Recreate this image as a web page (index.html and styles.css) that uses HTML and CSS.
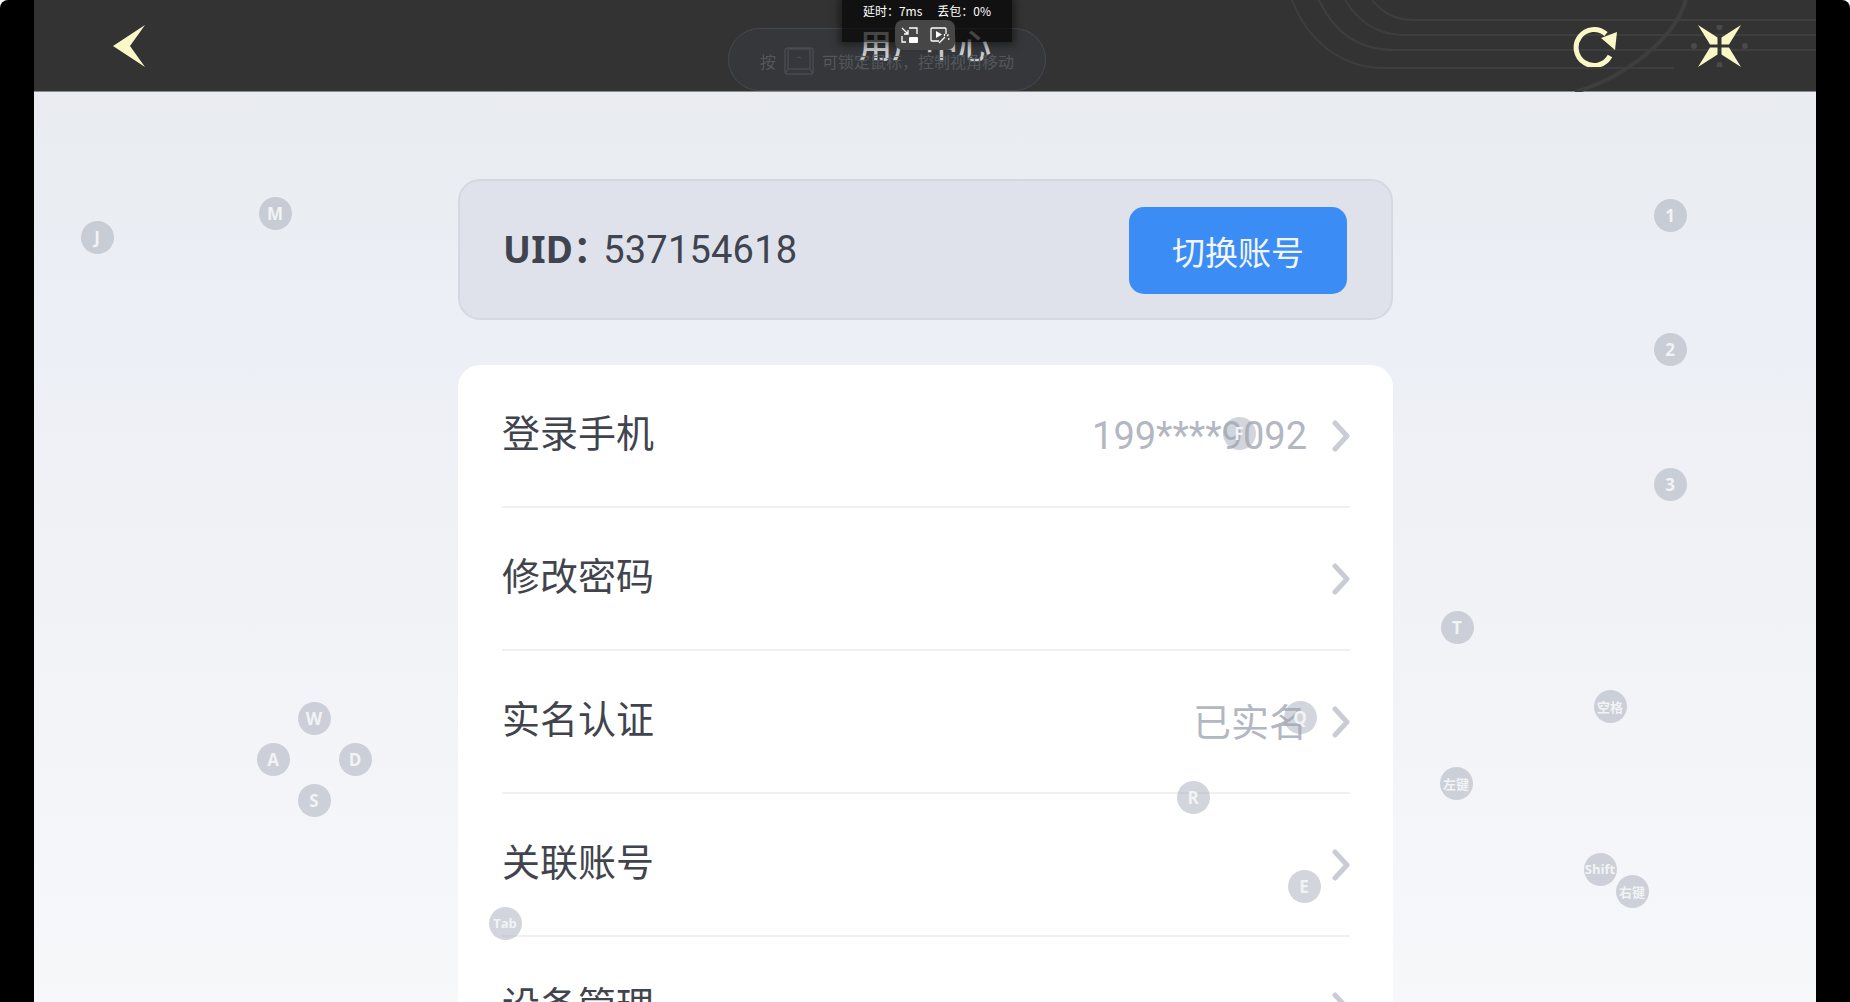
FILE: index.html
```html
<!DOCTYPE html>
<html lang="zh-CN">
<head>
    <meta charset="UTF-8">
    <meta name="viewport" content="width=device-width, initial-scale=1.0">
    <title>用户中心</title>
    <link rel="stylesheet" href="styles.css">
</head>
<body>
<div class="screen">
    <div class="app">
        <header class="topbar">
            <svg class="topbar-lines" width="1782" height="92" viewBox="0 0 1782 92" fill="none">
                <path d="M1338 0C1350 14 1362 20 1380 20H1782M1311 0C1326 24 1345 35 1370 35H1782M1285 0C1300 32 1325 50 1360 50H1782M1258 0C1275 44 1310 68 1350 68H1640" stroke="#3e3e3e" stroke-width="2"/>
                <path d="M1652 0C1640 40 1590 78 1541 92" stroke="#3e3e3e" stroke-width="4"/>
            </svg>
            <button class="icon-btn">
                <svg width="32" height="42" viewBox="0 0 32 42"><path d="M32 0L17 21L32 42L0 21Z" fill="#fbf8c8"/></svg>
            </button>
            <h1 class="title">用户中心</h1>
            <div class="topbar-right">
                <button class="icon-btn">
                    <svg width="44" height="42" viewBox="0 0 44 42" fill="none">
                        <path d="M33 9A18 18 0 1 0 37 31" stroke="#fbf8c8" stroke-width="5"/>
                        <path d="M44 7L42 25L28 13Z" fill="#fbf8c8"/>
                    </svg>
                </button>
                <button class="icon-btn icon-btn-close">
                    <svg width="59" height="42" viewBox="0 0 59 42">
                        <g fill="#4a4a48"><circle cx="29.5" cy="2" r="3"/><circle cx="29.5" cy="40" r="3"/><circle cx="4" cy="21" r="3"/><circle cx="55" cy="21" r="3"/></g>
                        <g fill="#fbf8c8">
                            <path d="M8 0L27.500 12.500L27.500 19.500L20 19.500Z"/>
                            <path d="M51 0L31.500 12.500L31.500 19.500L39 19.500Z"/>
                            <path d="M8 42L27.500 29.500L27.500 22.500L20 22.500Z"/>
                            <path d="M51 42L31.500 29.500L31.500 22.500L39 22.500Z"/>
                        </g>
                    </svg>
                </button>
            </div>
        </header>

        <main class="content">
            <section class="uid-card">
                <p class="uid"><b>UID：</b>537154618</p>
                <button class="switch-btn">切换账号</button>
            </section>

            <section class="menu">
                <div class="menu-row">
                    <span class="menu-label">登录手机</span>
                    <span class="menu-value">199****9092</span>
                    <svg class="chevron" width="18" height="32" viewBox="0 0 18 32" fill="none"><path d="M3 3L15 16L3 29" stroke="#c9ccd4" stroke-width="5" stroke-linecap="round" stroke-linejoin="round"/></svg>
                </div>
                <div class="menu-row">
                    <span class="menu-label">修改密码</span>
                    <svg class="chevron" width="18" height="32" viewBox="0 0 18 32" fill="none"><path d="M3 3L15 16L3 29" stroke="#c9ccd4" stroke-width="5" stroke-linecap="round" stroke-linejoin="round"/></svg>
                </div>
                <div class="menu-row">
                    <span class="menu-label">实名认证</span>
                    <span class="menu-value menu-value-low">已实名</span>
                    <svg class="chevron" width="18" height="32" viewBox="0 0 18 32" fill="none"><path d="M3 3L15 16L3 29" stroke="#c9ccd4" stroke-width="5" stroke-linecap="round" stroke-linejoin="round"/></svg>
                </div>
                <div class="menu-row">
                    <span class="menu-label">关联账号</span>
                    <svg class="chevron" width="18" height="32" viewBox="0 0 18 32" fill="none"><path d="M3 3L15 16L3 29" stroke="#c9ccd4" stroke-width="5" stroke-linecap="round" stroke-linejoin="round"/></svg>
                </div>
                <div class="menu-row">
                    <span class="menu-label">设备管理</span>
                    <svg class="chevron" width="18" height="32" viewBox="0 0 18 32" fill="none"><path d="M3 3L15 16L3 29" stroke="#c9ccd4" stroke-width="5" stroke-linecap="round" stroke-linejoin="round"/></svg>
                </div>
            </section>
        </main>
    </div>

    <!-- Indication au-dessus de la barre -->
    <div class="hint">
        <span>按</span>
        <svg width="30" height="28" viewBox="0 0 30 28" fill="none" stroke="#505458">
            <rect x="1" y="1" width="28" height="26" rx="2"/>
            <rect x="4" y="2" width="22" height="20" rx="1"/>
            <path d="M4 22L1 27M26 22L29 27M13 11Q15 9 17 11"/>
        </svg>
        <span>可锁定鼠标，控制视角移动</span>
    </div>

    <div class="stream-bar">
        <div class="stream-stats"><span>延时：7ms</span><span>丢包：0%</span></div>
    </div>
    <div class="stream-tools">
        <svg width="18" height="17" viewBox="0 0 18 17" fill="none" stroke="#fff" stroke-width="1.300">
            <path d="M8 1H16V7M1 9V15H5M1 1L7 7M7 3V7H3"/>
            <rect x="8" y="10" width="9" height="6" rx="1" fill="#fff" stroke="none"/>
        </svg>
        <svg width="20" height="17" viewBox="0 0 20 17" fill="none" stroke="#fff" stroke-width="1.300">
            <path d="M9 14H2Q1 14 1 13V2Q1 1 2 1H15Q16 1 16 2V7"/>
            <path d="M6 4L12 7.500L6 11Z" fill="#fff" stroke="none"/>
            <path d="M9 16L15 10M14.500 7V9M17 9L18.500 7.500M18 12H19.500"/>
        </svg>
    </div>

    <!-- Touches du clavier virtuel -->
    <span class="key" style="left: 97px; top: 238px">J</span>
    <span class="key" style="left: 275px; top: 214px">M</span>
    <span class="key" style="left: 1670px; top: 216px">1</span>
    <span class="key" style="left: 1670px; top: 350px">2</span>
    <span class="key" style="left: 1670px; top: 485px">3</span>
    <span class="key" style="left: 1457px; top: 628px">T</span>
    <span class="key key-small" style="left: 1610px; top: 707px">空格</span>
    <span class="key key-small" style="left: 1456px; top: 784px">左键</span>
    <span class="key key-small" style="left: 1600px; top: 870px">Shift</span>
    <span class="key key-small" style="left: 1632px; top: 892px">右键</span>
    <span class="key" style="left: 314px; top: 719px">W</span>
    <span class="key" style="left: 273px; top: 760px">A</span>
    <span class="key" style="left: 355px; top: 760px">D</span>
    <span class="key" style="left: 314px; top: 801px">S</span>
    <span class="key key-small" style="left: 505px; top: 924px">Tab</span>
    <span class="key" style="left: 1193px; top: 798px">R</span>
    <span class="key" style="left: 1304px; top: 887px">E</span>
    <span class="key" style="left: 1300px; top: 718px">Q</span>
    <span class="key" style="left: 1239px; top: 434px">F</span>
</div>
</body>
</html>
```

FILE: styles.css
```css
* {
    box-sizing: border-box;
}

html, body {
    height: 100%;
    margin: 0;
    overflow: hidden;
    background-color: #fff;
}

body {
    font-family: "Noto Sans CJK SC", "Noto Sans", sans-serif;
}

button {
    font-family: inherit;
    border: none;
    background: none;
    padding: 0;
    cursor: pointer;
}

.screen {
    position: relative;
    height: 100%;
    padding: 0 34px;
    background-color: #000;
    border-radius: 8px 8px 0 0;
    overflow: hidden;
}

.app {
    display: flex;
    flex-direction: column;
    height: 100%;
    background: linear-gradient(#e9ebef 0, #eaedf2 200px, #eceff6 320px, #eff1f5 500px, #f4f5f9 800px, #f7f8fa 100%);
}

/* Barre du haut */
.topbar {
    position: relative;
    flex: none;
    display: flex;
    align-items: center;
    justify-content: space-between;
    height: 92px;
    padding: 0 67px 0 79px;
    background-color: #333;
    border-bottom: 1px solid #8c8c8c;
}

.topbar-lines {
    position: absolute;
    left: 0;
    top: 0;
}

.icon-btn {
    position: relative;
    display: flex;
    height: 42px;
}

.topbar-right {
    position: relative;
    display: flex;
    gap: 73px;
    align-items: center;
}

.title {
    position: absolute;
    left: 0;
    right: 0;
    top: 22px;
    margin: 0;
    text-align: center;
    color: #fff;
    font-size: 33px;
    font-weight: 500;
    line-height: 44px;
}

.hint {
    position: absolute;
    left: 728px;
    top: 28px;
    width: 318px;
    height: 63px;
    display: flex;
    align-items: center;
    justify-content: center;
    gap: 8px;
    padding-top: 2px;
    color: #53575b;
    font-size: 16px;
    background-color: rgba(62, 70, 78, 0.28);
    border: 1px solid #474a4d;
    border-radius: 32px;
}

.stream-bar {
    position: absolute;
    left: 842px;
    top: 0;
    width: 170px;
    height: 42px;
    background-color: rgba(0, 0, 0, 0.66);
    box-shadow: 0 0 8px 3px rgba(0, 0, 0, 0.45);
}

.stream-stats {
    display: flex;
    justify-content: center;
    gap: 15px;
    padding-top: 2px;
    color: #fff;
    font-size: 12px;
    line-height: 18px;
}

.stream-tools {
    position: absolute;
    left: 895px;
    top: 20px;
    width: 60px;
    height: 30px;
    display: flex;
    align-items: center;
    justify-content: center;
    gap: 11px;
    background-color: #464646;
    border-radius: 8px;
}

/* Contenu */
.content {
    flex: 1;
    display: flex;
    flex-direction: column;
    align-items: center;
    padding: 87px 0 0 1px;
    overflow: hidden;
}

.uid-card {
    flex: none;
    display: flex;
    align-items: center;
    justify-content: space-between;
    width: 935px;
    height: 141px;
    padding: 0 44px 0 43px;
    background-color: #dfe2eb;
    border: 2px solid #d4d8e2;
    border-radius: 22px;
}

.uid {
    margin: 0;
    color: #40444f;
    font-size: 38px;
    letter-spacing: 0.2px;
    font-family: Roboto, "Noto Sans CJK SC", sans-serif;
    line-height: 50px;
}

.uid b {
    margin-right: -7px;
    font-family: "Noto Sans", "Noto Sans CJK SC", sans-serif;
    font-weight: 700;
    font-size: 37px;
}

.switch-btn {
    width: 218px;
    height: 87px;
    margin-top: 2px;
    color: #f2f6fc;
    font-size: 33px;
    background-color: #3c8cf5;
    border-radius: 15px;
}

.menu {
    flex: none;
    width: 935px;
    margin-top: 45px;
    padding: 0 43px 0 44px;
    background-color: #fff;
    border-radius: 22px 22px 0 0;
}

.menu-row {
    display: flex;
    align-items: center;
    gap: 25px;
    height: 143px;
    color: #41444d;
    font-size: 38px;
    border-bottom: 2px solid #eff0f3;
}

.menu-label {
    flex: 1;
    padding-bottom: 10px;
}

.menu-value {
    color: #b3b7c2;
    font-family: Roboto, "Noto Sans CJK SC", sans-serif;
}

.menu-value-low {
    position: relative;
    top: -2px;
}

.chevron {
    flex: none;
}

/* Touches virtuelles */
.key {
    position: absolute;
    width: 33px;
    height: 33px;
    margin: -17.5px 0 0 -16.5px;
    display: flex;
    align-items: center;
    justify-content: center;
    color: #f2f3f6;
    font-family: "Open Sans", "Noto Sans CJK SC", sans-serif;
    font-size: 17px;
    font-weight: 700;
    background-color: rgba(160, 168, 180, 0.48);
    border-radius: 50%;
}

.key-small {
    font-size: 13px;
    white-space: nowrap;
}
```
